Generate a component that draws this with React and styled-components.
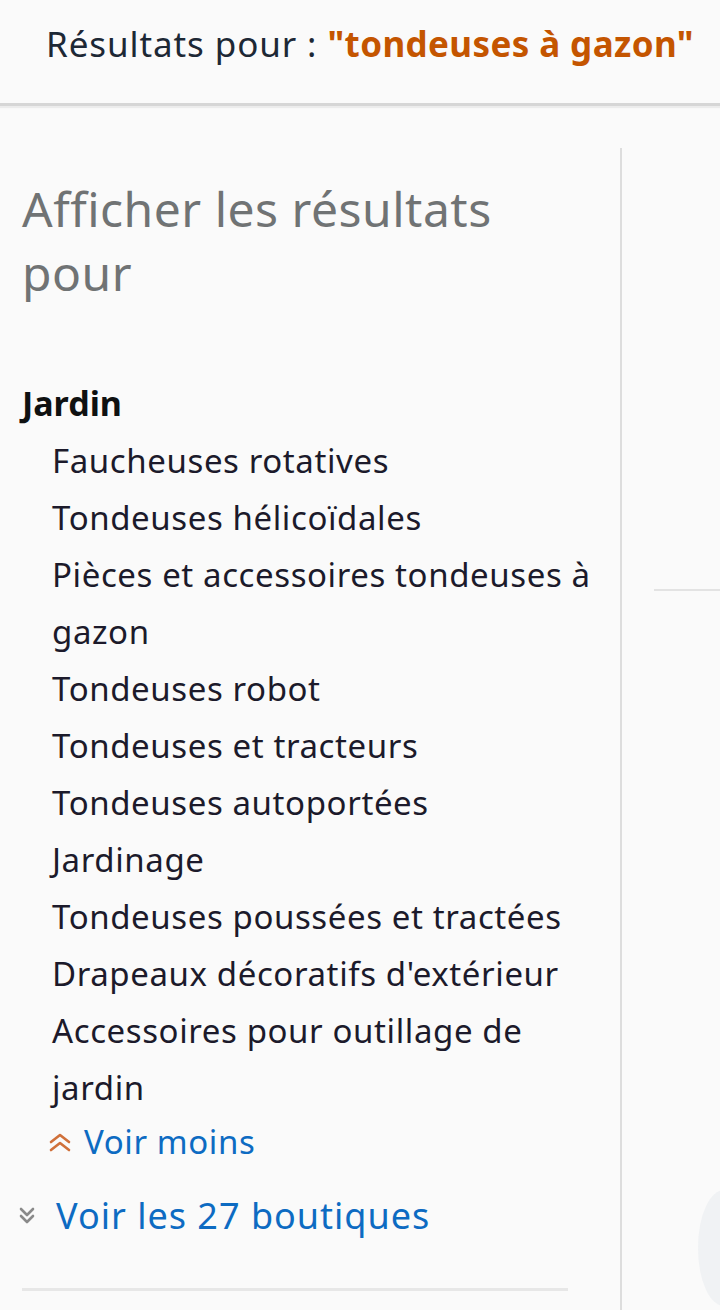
import React from "react";
import styled, { createGlobalStyle } from "styled-components";

const Global = createGlobalStyle`
  html, body {
    margin: 0;
    padding: 0;
    background: #fafafa;
  }
  body {
    font-family: "Noto Sans", "Liberation Sans", Arial, sans-serif;
    color: #0f1111;
  }
`;

const Page = styled.div`
  width: 720px;
  height: 1310px;
  overflow: hidden;
  background: #fafafa;
`;

const Header = styled.header`
  height: 106px;
  box-sizing: border-box;
  padding: 21px 0 0 46px;
  border-bottom: 3px solid #d6d6d6;
  box-shadow: 0 2px 1px #ececec;
  font-size: 35px;
  letter-spacing: 0.9px;
  line-height: 46px;
  color: #1d2835;
  white-space: nowrap;
`;

const Query = styled.span`
  color: #c45500;
  font-weight: 700;
  letter-spacing: 0.4px;
`;

const Body = styled.div`
  display: flex;
  padding-top: 42px;
`;

const Sidebar = styled.aside`
  width: 622px;
  flex: none;
  box-sizing: border-box;
  padding: 29px 26px 0 22px;
  border-right: 2px solid #dddddd;
  min-height: 1200px;
`;

const Heading = styled.h2`
  margin: 0 0 74px;
  font-size: 48px;
  letter-spacing: 0.5px;
  line-height: 64px;
  font-weight: 400;
  color: #707374;
`;

const Dept = styled.div`
  font-size: 34px;
  font-weight: 700;
  line-height: 48px;
  color: #0f1111;
`;

const List = styled.ul`
  list-style: none;
  margin: 5px 0 0;
  padding: 0 0 0 30px;
`;

const Item = styled.li`
  font-size: 33px;
  letter-spacing: 0.6px;
  line-height: 57px;
  color: #1c1a2b;
`;

const MoreLink = styled.a`
  display: flex;
  align-items: center;
  gap: ${(p) => p.$gap}px;
  font-size: ${(p) => p.$size}px;
  letter-spacing: ${(p) => p.$ls}px;
  line-height: ${(p) => p.$lh}px;
  color: #0d6bc2;
  text-decoration: none;
  margin-left: ${(p) => p.$indent}px;
  margin-top: ${(p) => p.$top}px;
`;

const Divider = styled.hr`
  margin: 44px 26px 0 0;
  border: none;
  border-top: 3px solid #e7e7e7;
`;

const Main = styled.main`
  flex: 1;
  padding: 441px 0 0 32px;
  position: relative;
`;

const Rule = styled.div`
  border-top: 2px solid #e3e3e3;
`;

const Ghost = styled.svg`
  position: absolute;
  right: 0;
  top: 1030px;
`;

function Chevrons({ up, color, w }) {
  return (
    <svg width={w} height="24" viewBox={`0 0 ${w} 24`} fill="none">
      <g stroke={color} strokeWidth="2.6" strokeLinecap="round" strokeLinejoin="round">
        {up ? (
          <>
            <path d={`M3 12 L${w / 2} 5 L${w - 3} 12`} />
            <path d={`M3 20 L${w / 2} 13 L${w - 3} 20`} />
          </>
        ) : (
          <>
            <path d={`M3 5 L${w / 2} 11 L${w - 3} 5`} />
            <path d={`M3 12 L${w / 2} 18 L${w - 3} 12`} />
          </>
        )}
      </g>
    </svg>
  );
}

const items = [
  "Faucheuses rotatives",
  "Tondeuses hélicoïdales",
  "Pièces et accessoires tondeuses à gazon",
  "Tondeuses robot",
  "Tondeuses et tracteurs",
  "Tondeuses autoportées",
  "Jardinage",
  "Tondeuses poussées et tractées",
  "Drapeaux décoratifs d'extérieur",
  "Accessoires pour outillage de jardin",
];

export default function App() {
  return (
    <Page>
      <Global />
      <Header>
        Résultats pour : <Query>"tondeuses à gazon"</Query>
      </Header>
      <Body>
        <Sidebar>
          <Heading>Afficher les résultats pour</Heading>
          <Dept>Jardin</Dept>
          <List>
            {items.map((t) => (
              <Item key={t}>{t}</Item>
            ))}
          </List>
          <MoreLink href="#" $indent={26} $gap={12} $size={33} $ls={0.6} $lh={52} $top={0}>
            <Chevrons up w={24} color="#d0703a" />
            Voir moins
          </MoreLink>
          <MoreLink href="#" $indent={-4} $gap={20} $size={36} $ls={1} $lh={56} $top={20}>
            <Chevrons w={18} color="#8a8a8a" />
            Voir les 27 boutiques
          </MoreLink>
          <Divider />
        </Sidebar>
        <Main>
          <Rule />
          <Ghost width="40" height="140" viewBox="0 0 40 140">
            <ellipse cx="44" cy="70" rx="26" ry="58" fill="#e9edf0" opacity="0.6" />
          </Ghost>
        </Main>
      </Body>
    </Page>
  );
}
